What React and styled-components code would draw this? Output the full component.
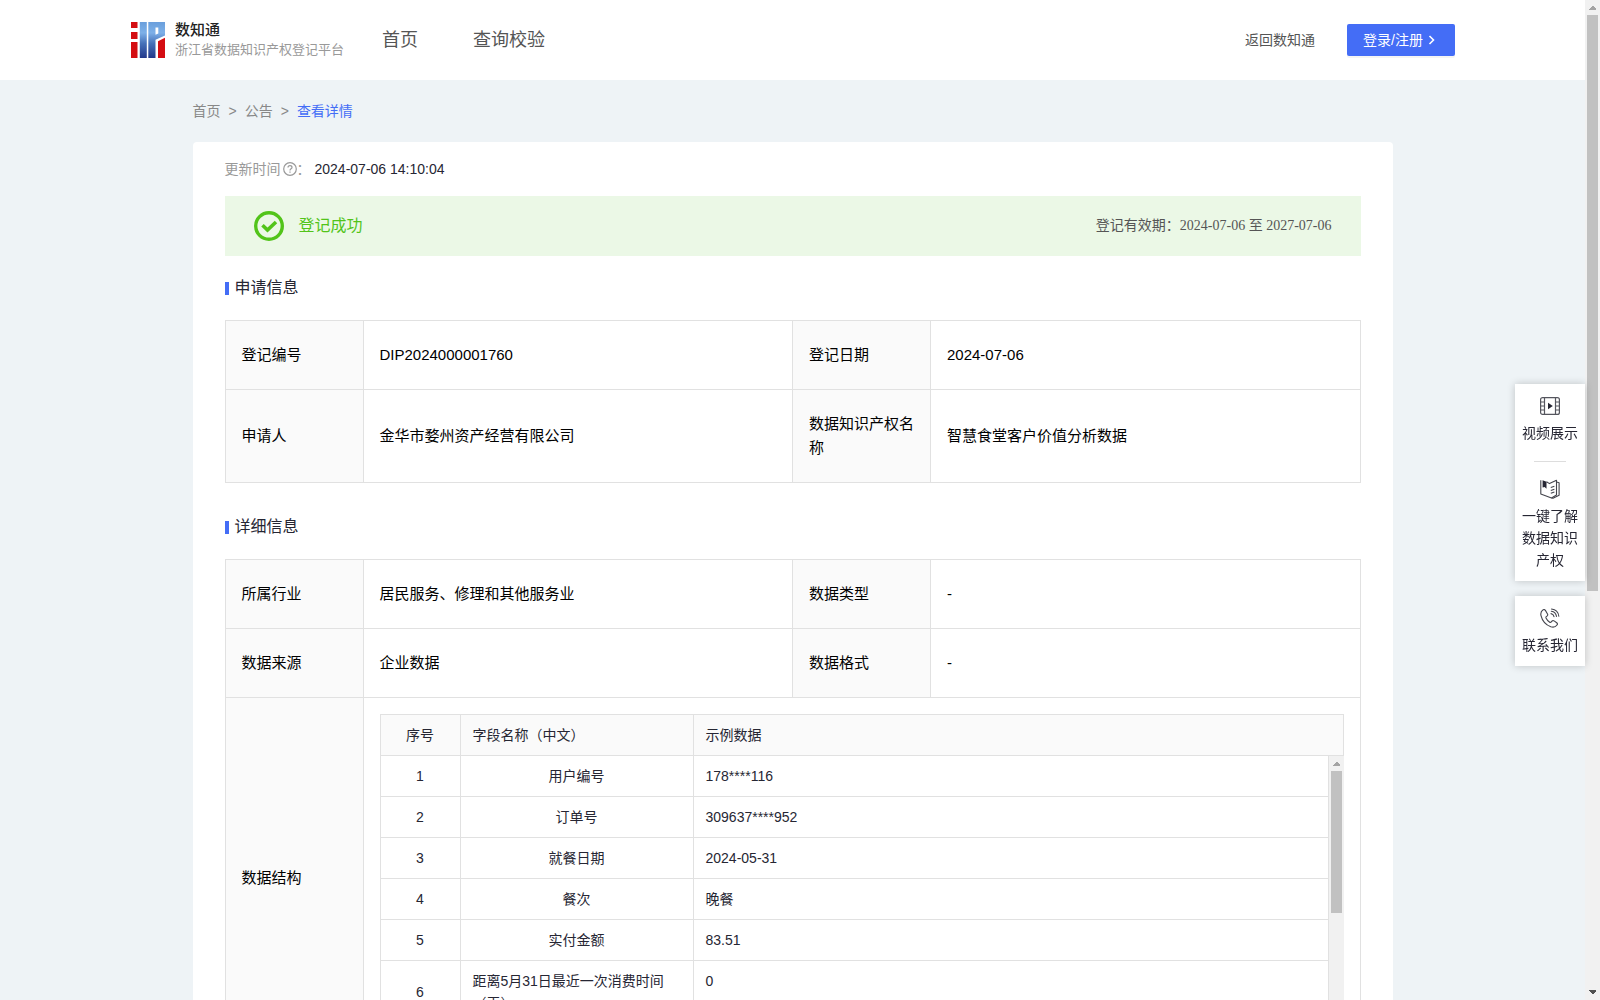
import React from 'react';
import styled, { createGlobalStyle } from 'styled-components';

const GlobalStyle = createGlobalStyle`
  * {
    box-sizing: border-box;
  }
  body {
    margin: 0;
    font-family: "Liberation Sans", "Noto Sans CJK SC", sans-serif;
    font-size: 14px;
    line-height: 22px;
    color: #262633;
  }
  a {
    color: inherit;
    text-decoration: none;
  }
  button {
    font-family: inherit;
    cursor: pointer;
  }
`;

const Window = styled.div`
  position: relative;
  display: flex;
  height: 100vh;
  overflow: hidden;
`;

const Page = styled.div`
  flex: 1;
  min-width: 0;
  overflow-y: auto;
  scrollbar-width: none;
  background: #eef3f6;
`;

const Track = styled.div`
  flex: none;
  display: flex;
  flex-direction: column;
  align-items: center;
  width: 15px;
  background: #f1f1f1;
  svg {
    display: block;
    flex: none;
  }
`;

const Thumb = styled.div`
  width: 11px;
  height: ${props => props.$size};
  background: #c1c1c1;
`;

const TrackSpace = styled.div`
  flex: 1;
`;

const Header = styled.header`
  background: #fff;
`;

const HeaderInner = styled.div`
  display: flex;
  align-items: center;
  max-width: 1325px;
  height: 80px;
  margin: 0 auto;
`;

const Brand = styled.a`
  display: flex;
  align-items: center;
  gap: 9px;
  white-space: nowrap;
  svg {
    display: block;
  }
`;

const BrandName = styled.div`
  font-size: 15px;
  line-height: 20px;
  font-weight: 500;
  color: #222;
`;

const BrandSub = styled.div`
  font-size: 13px;
  line-height: 20px;
  color: #999;
`;

const Nav = styled.nav`
  display: flex;
  flex: 1;
  gap: 55px;
  margin-left: 38px;
  font-size: 18px;
  line-height: 24px;
  color: #555;
`;

const BackLink = styled.a`
  margin-right: 32px;
  color: #555;
`;

const LoginButton = styled.button`
  display: flex;
  align-items: center;
  gap: 4px;
  height: 32px;
  padding: 0 16px;
  border: none;
  border-radius: 2px;
  background: #446df6;
  box-shadow: 0 2px 0 rgba(0, 0, 0, 0.045);
  color: #fff;
  font-size: 14px;
  line-height: 22px;
`;

const Content = styled.main`
  max-width: 1200px;
  margin: 0 auto;
  padding-bottom: 32px;
`;

const Breadcrumb = styled.nav`
  display: flex;
  align-items: center;
  gap: 8px;
  height: 62px;
  color: #888;
`;

const Crumb = styled.a`
  color: ${props => (props.$active ? '#446df6' : '#888')};
`;

const Card = styled.div`
  padding: 16px 32px 32px;
  border-radius: 4px;
  background: #fff;
`;

const UpdateTime = styled.div`
  display: flex;
  align-items: center;
  margin-bottom: 16px;
  svg {
    margin-left: 2px;
  }
`;

const Muted = styled.span`
  display: flex;
  align-items: center;
  margin-right: 4px;
  color: #999;
`;

const Banner = styled.div`
  display: flex;
  align-items: center;
  gap: 15px;
  height: 60px;
  padding: 0 29px;
  background: #ebf8e6;
`;

const BannerStatus = styled.div`
  flex: 1;
  font-size: 16px;
  line-height: 24px;
  color: #52c41a;
`;

const BannerPeriod = styled.div`
  font-family: "Liberation Serif", "Noto Sans CJK SC", serif;
  color: #555;
`;

const SectionTitle = styled.h2`
  display: flex;
  align-items: center;
  gap: 6px;
  margin: ${props => (props.$first ? '20px' : '32px')} 0 20px;
  font-size: 16px;
  line-height: 24px;
  font-weight: 400;
  &::before {
    content: '';
    width: 4px;
    height: 13px;
    background: #446df6;
  }
`;

const InfoTable = styled.table`
  width: 100%;
  table-layout: fixed;
  border-collapse: collapse;
  font-size: 15px;
  line-height: 24px;
  color: #000;
`;

const LabelCol = styled.col`
  width: 138px;
`;

const Label = styled.th`
  padding: 22px 16px;
  border: 1px solid #e1e1e1;
  background: #fafafa;
  font-weight: 400;
  text-align: left;
`;

const Value = styled.td`
  padding: ${props => (props.$nested ? '16px' : '22px 16px')};
  border: 1px solid #e1e1e1;
`;

const FieldTable = styled.table`
  width: 100%;
  table-layout: fixed;
  border-collapse: separate;
  border-spacing: 0;
  font-size: 14px;
  line-height: 22px;
  color: #262633;
  th,
  td {
    padding: 9px 12px;
    border-right: 1px solid #e1e1e1;
    border-bottom: 1px solid #e1e1e1;
    font-weight: 400;
    text-align: left;
    vertical-align: top;
  }
  th {
    border-top: 1px solid #e1e1e1;
    background: #fafafa;
  }
  th:first-child,
  td:first-child {
    border-left: 1px solid #e1e1e1;
    text-align: center;
    vertical-align: middle;
  }
`;

const FieldCol = styled.col`
  width: ${props => props.$width};
`;

const FieldName = styled.div`
  display: flex;
  justify-content: center;
`;

const FieldBody = styled.div`
  display: flex;
  height: 286px;
`;

const FieldScroll = styled.div`
  flex: 1;
  min-width: 0;
  overflow-y: auto;
  scrollbar-width: none;
`;

const Side = styled.aside`
  position: absolute;
  top: 384px;
  right: 15px;
  display: flex;
  flex-direction: column;
  gap: 15px;
  width: 70px;
`;

const SidePanel = styled.div`
  display: flex;
  flex-direction: column;
  align-items: center;
  padding: 12px 7px 10px;
  background: #fff;
  box-shadow: 0 0 8px rgba(0, 0, 0, 0.2);
`;

const SideItem = styled.a`
  display: flex;
  flex-direction: column;
  align-items: center;
  gap: 6px;
  text-align: center;
`;

const SideLine = styled.div`
  width: 32px;
  height: 1px;
  margin: 17px 0;
  background: #ddd;
`;

const FIELDS = [
  ['用户编号', '178****116'],
  ['订单号', '309637****952'],
  ['就餐日期', '2024-05-31'],
  ['餐次', '晚餐'],
  ['实付金额', '83.51'],
  ['距离5月31日最近一次消费时间（天）', '0'],
  ['消费次数', '1'],
  ['消费金额', '83.51'],
  ['客户分类', '一般客户'],
];

function Arrow({ down }) {
  return (
    <svg width="15" height="15" viewBox="0 0 15 15" shapeRendering="crispEdges">
      {down ? <path d="M4 5h7v1l-3 3h-1l-3-3z" fill="#505050" /> : <path d="M4 10h7v-1l-3-3h-1l-3 3z" fill="#a3a3a3" />}
    </svg>
  );
}

function Scrollbar({ size }) {
  return (
    <Track aria-hidden="true">
      <Arrow />
      <Thumb $size={size} />
      <TrackSpace />
      <Arrow down />
    </Track>
  );
}

function Logo() {
  return (
    <svg width="36" height="38" viewBox="0 0 36 38">
      <defs>
        <linearGradient id="logoBlue" gradientUnits="userSpaceOnUse" x1="0" y1="1" x2="0" y2="37">
          <stop offset="0" stopColor="#6a9fdc" />
          <stop offset="0.3" stopColor="#7db0e8" />
          <stop offset="0.6" stopColor="#4570b8" />
          <stop offset="1" stopColor="#22388a" />
        </linearGradient>
      </defs>
      <path d="M1 1h6.500v6H1zM1 11h6.500v7H1zM1 21h6.500v16H1z" fill="#d40d12" />
      <path d="M9.800 1h7v36h-7z" fill="url(#logoBlue)" />
      <path fillRule="evenodd" d="M18.300 1H35v13.500l-9.500 4.300V37h-7.200zM25.500 6.500v7.200l2.800-1.300V6.500z" fill="url(#logoBlue)" />
      <path d="M28 20.200l7-3.400V37h-7z" fill="#d40d12" />
    </svg>
  );
}

function VideoIcon() {
  return (
    <svg width="20" height="20" viewBox="0 0 20 20" fill="none" stroke="#55565e" strokeWidth="1.200">
      <rect x="0.600" y="1.600" width="18.800" height="16.800" rx="2" />
      <path d="M4.500 1.600v16.800M15.500 1.600v16.800M0.600 6h3.900M0.600 10h3.900M0.600 14h3.900M15.500 6h3.900M15.500 10h3.900M15.500 14h3.900" />
      <path d="M8 6.800v6.400l4.800-3.200z" fill="#262633" stroke="none" />
    </svg>
  );
}

function BookIcon() {
  return (
    <svg width="20" height="20" viewBox="0 0 20 20" fill="none" stroke="#44454d" strokeWidth="1.100" strokeLinejoin="round">
      <path d="M0.800 1.200v13.800L11.500 19l5-3V1.200L9.500 4.600 6.500 2.800" />
      <path d="M16.500 3l2.600.8v12.400L13 19.200l-1.500-.2" />
      <path d="M10.800 8.500l3.600-1.300M10.800 11.500l3.600-1.300M10.800 14.300l3.600-1.300" />
      <path d="M2.600 1.200l3.900 1.600v7L4.600 8 2.600 8.400z" fill="#262633" stroke="none" />
    </svg>
  );
}

function PhoneIcon() {
  return (
    <svg width="20" height="20" viewBox="0 0 20 20" fill="none" stroke="#44454d" strokeWidth="1.100" strokeLinecap="round" strokeLinejoin="round">
      <path d="M3.200 1.800C1.200 3 .4 5 1 7.600c1.200 5 5.200 9.400 9.800 11.200 2.600.8 4.800.2 6.200-1.800.6-.8.500-1.700-.3-2.300l-2.600-1.800c-.8-.5-1.600-.4-2.200.3l-.8.9c-.4.400-.9.400-1.400.1-1.900-1.300-3-2.700-3.700-4.200-.2-.5-.1-.9.300-1.300l.9-.8c.6-.6.7-1.300.3-2L5.400 2.400c-.5-.8-1.400-1.100-2.200-.6z" />
      <path d="M11.500 1c4 .4 6.800 3.200 7.300 7.200M11.300 3.200c2.800.4 4.800 2.400 5.200 5.200M11 5.600c1.600.3 2.700 1.400 3 3" />
    </svg>
  );
}

function FieldCols() {
  return (
    <colgroup>
      <FieldCol $width="81px" />
      <FieldCol $width="233px" />
      <col />
    </colgroup>
  );
}

function InfoCols() {
  return (
    <colgroup>
      <LabelCol />
      <col />
      <LabelCol />
      <col />
    </colgroup>
  );
}

function InfoRow({ items }) {
  return (
    <tr>
      {items.map(([label, value]) => (
        <React.Fragment key={label}>
          <Label scope="row">{label}</Label>
          <Value>{value}</Value>
        </React.Fragment>
      ))}
    </tr>
  );
}

function FieldList() {
  return (
    <>
      <FieldTable>
        <FieldCols />
        <thead>
          <tr>
            <th>序号</th>
            <th>字段名称（中文）</th>
            <th>示例数据</th>
          </tr>
        </thead>
      </FieldTable>
      <FieldBody>
        <FieldScroll>
          <FieldTable>
            <FieldCols />
            <tbody>
              {FIELDS.map(([name, sample], i) => (
                <tr key={name}>
                  <td>{i + 1}</td>
                  <td><FieldName>{name}</FieldName></td>
                  <td>{sample}</td>
                </tr>
              ))}
            </tbody>
          </FieldTable>
        </FieldScroll>
        <Scrollbar size="142px" />
      </FieldBody>
    </>
  );
}

function TopBar() {
  return (
    <Header>
      <HeaderInner>
        <Brand href="#">
          <Logo />
          <div>
            <BrandName>数知通</BrandName>
            <BrandSub>浙江省数据知识产权登记平台</BrandSub>
          </div>
        </Brand>
        <Nav>
          <a href="#">首页</a>
          <a href="#">查询校验</a>
        </Nav>
        <BackLink href="#">返回数知通</BackLink>
        <LoginButton type="button">
          登录/注册
          <svg width="12" height="12" viewBox="0 0 12 12" fill="none" stroke="#fff" strokeWidth="1.600">
            <path d="M2.500 2L6.500 6L2.500 10" />
          </svg>
        </LoginButton>
      </HeaderInner>
    </Header>
  );
}

function SideBar() {
  return (
    <Side>
      <SidePanel>
        <SideItem href="#"><VideoIcon />视频展示</SideItem>
        <SideLine />
        <SideItem href="#"><BookIcon />一键了解数据知识产权</SideItem>
      </SidePanel>
      <SidePanel>
        <SideItem href="#"><PhoneIcon />联系我们</SideItem>
      </SidePanel>
    </Side>
  );
}

function App() {
  return (
    <Window>
      <GlobalStyle />
      <Page>
        <TopBar />
        <Content>
          <Breadcrumb>
            <Crumb href="#">首页</Crumb>
            <span>&gt;</span>
            <Crumb href="#">公告</Crumb>
            <span>&gt;</span>
            <Crumb href="#" $active>查看详情</Crumb>
          </Breadcrumb>
          <Card>
            <UpdateTime>
              <Muted>
                更新时间
                <svg width="14" height="14" viewBox="0 0 14 14" fill="none" stroke="#999" strokeWidth="1.200">
                  <circle cx="7" cy="7" r="6.300" />
                  <path d="M5 5.600c0-1.200.9-1.900 2-1.900s2 .7 2 1.800c0 1.300-2 1.400-2 2.900M7 9.500v1.200" />
                </svg>
                ：
              </Muted>
              2024-07-06 14:10:04
            </UpdateTime>
            <Banner>
              <svg width="30" height="30" viewBox="0 0 30 30" fill="none" stroke="#52c41a">
                <circle cx="15" cy="15" r="13.300" strokeWidth="3.400" />
                <path d="M8.500 14.200l5 4.800 8.500-8" strokeWidth="3.600" />
              </svg>
              <BannerStatus>登记成功</BannerStatus>
              <BannerPeriod>登记有效期：2024-07-06 至 2027-07-06</BannerPeriod>
            </Banner>

            <SectionTitle $first>申请信息</SectionTitle>
            <InfoTable>
              <InfoCols />
              <tbody>
                <InfoRow items={[['登记编号', 'DIP2024000001760'], ['登记日期', '2024-07-06']]} />
                <InfoRow items={[['申请人', '金华市婺州资产经营有限公司'], ['数据知识产权名称', '智慧食堂客户价值分析数据']]} />
              </tbody>
            </InfoTable>

            <SectionTitle>详细信息</SectionTitle>
            <InfoTable>
              <InfoCols />
              <tbody>
                <InfoRow items={[['所属行业', '居民服务、修理和其他服务业'], ['数据类型', '-']]} />
                <InfoRow items={[['数据来源', '企业数据'], ['数据格式', '-']]} />
                <tr>
                  <Label scope="row">数据结构</Label>
                  <Value colSpan={3} $nested><FieldList /></Value>
                </tr>
              </tbody>
            </InfoTable>
          </Card>
        </Content>
      </Page>
      <Scrollbar size="576px" />
      <SideBar />
    </Window>
  );
}

export default App;
